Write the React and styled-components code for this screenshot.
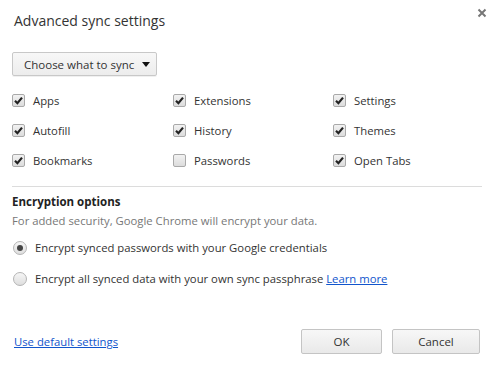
import styled, { createGlobalStyle } from 'styled-components'

const Global = createGlobalStyle`
    body {
        margin: 0;
        background: #fff;
        font-family: "Open Sans", "Noto Sans", sans-serif;
        color: #333;
    }
`

const Dialog = styled.div`
    width: 495px;
    height: 366px;
    box-sizing: border-box;
    padding: 0 13px 12px 12px;
    display: flex;
    flex-direction: column;
    font-size: 11.3px;
`

const Header = styled.div`
    height: 40px;
    display: flex;
    align-items: center;
    justify-content: space-between;
`

const Title = styled.h1`
    margin: 0 0 0 2px;
    font-size: 14px;
    font-weight: 400;
    color: #333;
`

const Close = styled.button`
    border: none;
    background: none;
    padding: 0;
    margin: -14px -8px 0 0;
    width: 16px;
    height: 16px;
    display: flex;
    align-items: center;
    justify-content: center;
`

const Dropdown = styled.button`
    margin-top: 12px;
    width: 145px;
    height: 24px;
    box-sizing: border-box;
    border: 1px solid #c8c8c8;
    border-radius: 2px;
    background: linear-gradient(#f7f7f7, #ececec);
    box-shadow: 0 1px 0 rgba(0, 0, 0, 0.06);
    font: inherit;
    font-size: 11.5px;
    color: #333;
    display: flex;
    align-items: center;
    justify-content: space-between;
    padding: 0 6px 0 11px;
`

const Arrow = styled.span`
    width: 0;
    height: 0;
    border-left: 4px solid transparent;
    border-right: 4px solid transparent;
    border-top: 5px solid #111;
`

const Grid = styled.div`
    margin-top: 9px;
    display: grid;
    grid-template-columns: 161px 160px 1fr;
    grid-auto-rows: 30px;
`

const Option = styled.label`
    display: flex;
    align-items: center;
    gap: 8px;
`

const Box = styled.span`
    width: 13px;
    height: 13px;
    box-sizing: border-box;
    border: 1px solid #a9a9a9;
    border-radius: 2px;
    background: linear-gradient(#f2f2f2, #dcdcdc);
    display: flex;
    align-items: center;
    justify-content: center;
`

const Separator = styled.hr`
    margin: 11px 0 0;
    border: none;
    border-top: 1px solid #dcdcdc;
`

const Heading = styled.h2`
    margin: 7px 0 0 0;
    font-size: 11.5px;
    font-weight: 700;
    color: #222;
`

const Note = styled.p`
    margin: 4px 0 0 0;
    color: #777;
`

const RadioRow = styled.label`
    display: flex;
    align-items: center;
    gap: 8px;
    height: 31px;
    margin-top: ${p => p.$first ? '4px' : '0'};
    margin-left: 1px;
`

const Radio = styled.span`
    width: 14px;
    height: 14px;
    box-sizing: border-box;
    border-radius: 50%;
    border: 1px solid #b4b4b4;
    background: linear-gradient(#f6f6f6, #dedede);
    display: flex;
    align-items: center;
    justify-content: center;
    &::after {
        content: '';
        width: 6px;
        height: 6px;
        border-radius: 50%;
        background: ${p => p.$on ? '#444' : 'transparent'};
    }
`

const Link = styled.a`
    color: #15c;
    text-decoration: underline;
    cursor: pointer;
`

const Footer = styled.div`
    margin-top: auto;
    display: flex;
    align-items: center;
    justify-content: space-between;
    padding: 0 2px 0 2px;
`

const Buttons = styled.div`
    display: flex;
    gap: 10px;
`

const Button = styled.button`
    height: 25px;
    width: ${p => p.$w}px;
    box-sizing: border-box;
    border: 1px solid #c4c4c4;
    border-radius: 2px;
    background: linear-gradient(#f7f7f7, #e9e9e9);
    font: inherit;
    font-size: 11.5px;
    color: #333;
`

function Check({ on }) {
    return (
        <Box>
            {on && (
                <svg width="9" height="9" viewBox="0 0 9 9">
                    <path d="M1 4.8 L3.4 7.2 L8 1.6" fill="none" stroke="#222" strokeWidth="2.2" />
                </svg>
            )}
        </Box>
    )
}

const items = [
    ['Apps', true], ['Extensions', true], ['Settings', true],
    ['Autofill', true], ['History', true], ['Themes', true],
    ['Bookmarks', true], ['Passwords', false], ['Open Tabs', true],
]

export default function App() {
    return (
        <Dialog>
            <Global />
            <Header>
                <Title>Advanced sync settings</Title>
                <Close>
                    <svg width="10" height="10" viewBox="0 0 10 10">
                        <path d="M1.5 1.5 L8.5 8.5 M8.5 1.5 L1.5 8.5" stroke="#777" strokeWidth="2" />
                    </svg>
                </Close>
            </Header>
            <div>
                <Dropdown>Choose what to sync <Arrow /></Dropdown>
            </div>
            <Grid>
                {items.map(([name, on]) => (
                    <Option key={name}>
                        <Check on={on} />
                        {name}
                    </Option>
                ))}
            </Grid>
            <Separator />
            <Heading>Encryption options</Heading>
            <Note>For added security, Google Chrome will encrypt your data.</Note>
            <RadioRow $first>
                <Radio $on />
                Encrypt synced passwords with your Google credentials
            </RadioRow>
            <RadioRow>
                <Radio />
                <span>Encrypt all synced data with your own sync passphrase <Link>Learn more</Link></span>
            </RadioRow>
            <Footer>
                <Link>Use default settings</Link>
                <Buttons>
                    <Button $w={81}>OK</Button>
                    <Button $w={88}>Cancel</Button>
                </Buttons>
            </Footer>
        </Dialog>
    )
}
